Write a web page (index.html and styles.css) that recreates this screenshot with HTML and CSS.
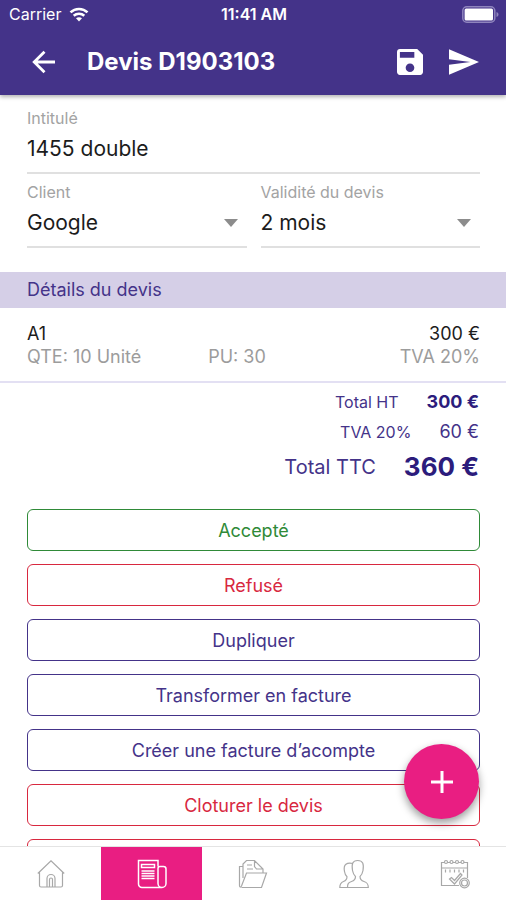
FILE: index.html
```html
<!DOCTYPE html>
<html lang="fr">

<head>
    <meta charset="UTF-8">
    <meta name="viewport" content="width=device-width, initial-scale=1.0">
    <title>Devis D1903103</title>
    <link rel="stylesheet" href="styles.css">
</head>

<body>
    <!-- En-tête -->
    <header class="header">
        <div class="status-bar">
            <div class="status-left">
                <span>Carrier</span>
                <svg width="20" height="15" viewBox="0 0 20 15" fill="none" stroke="#fff" stroke-width="2.6">
                    <path d="M1.5 5.4C6.2 .8 13.8 .8 18.5 5.4" />
                    <path d="M4.7 8.8C7.7 6 12.3 6 15.3 8.8" />
                    <path d="M10 14.4L7 11.3C8.7 9.8 11.3 9.8 13 11.3Z" fill="#fff" stroke="none" />
                </svg>
            </div>
            <div class="status-time">11:41 AM</div>
            <div class="status-right">
                <svg width="37" height="17" viewBox="0 0 37 17">
                    <rect x=".8" y=".8" width="32" height="15.4" rx="4" fill="none" stroke="#8f84bd" stroke-width="1.5" />
                    <rect x="2.6" y="2.6" width="28.4" height="11.8" rx="1.5" fill="#fff" />
                    <path d="M34.5 6v5c1.3-.5 2-1.4 2-2.5s-.7-2-2-2.5z" fill="#8f84bd" />
                </svg>
            </div>
        </div>
        <div class="toolbar">
            <button class="icon-btn" type="button" aria-label="Retour">
                <svg width="24" height="24" viewBox="0 0 24 24" fill="none" stroke="#fff" stroke-width="2.8">
                    <path d="M23 12H3M12.5 1.7L2.2 12l10.3 10.3" />
                </svg>
            </button>
            <h1>Devis D1903103</h1>
            <button class="icon-btn" type="button" aria-label="Enregistrer">
                <svg width="26" height="26" viewBox="3 3 18 18" fill="#fff">
                    <path d="M17 3H5c-1.110 0-2 .9-2 2v14c0 1.1.89 2 2 2h14c1.1 0 2-.9 2-2V7l-4-4zm-5 16c-1.660 0-3-1.340-3-3s1.340-3 3-3 3 1.340 3 3-1.340 3-3 3zm3-10H5V5h10v4z" />
                </svg>
            </button>
            <button class="icon-btn" type="button" aria-label="Envoyer">
                <svg width="30" height="26" viewBox="2 3 21 18" fill="#fff">
                    <path d="M2 21L23 12 2 3v7l15 2-15 2z" />
                </svg>
            </button>
        </div>
    </header>

    <!-- Contenu du devis -->
    <main class="content">
        <form class="form">
            <div class="field">
                <label for="intitule">Intitulé</label>
                <input id="intitule" type="text" value="1455 double">
            </div>
            <div class="field-row">
                <div class="field">
                    <label for="client">Client</label>
                    <select id="client">
                        <option>Google</option>
                    </select>
                </div>
                <div class="field">
                    <label for="validite">Validité du devis</label>
                    <select id="validite">
                        <option>2 mois</option>
                    </select>
                </div>
            </div>
        </form>

        <h2 class="section-title">Détails du devis</h2>

        <div class="item">
            <div class="item-row item-main">
                <span>A1</span>
                <span></span>
                <span class="right">300 €</span>
            </div>
            <div class="item-row item-info">
                <span>QTE: 10 Unité</span>
                <span>PU: 30</span>
                <span class="right">TVA 20%</span>
            </div>
        </div>

        <div class="totals">
            <div class="total">
                <span>Total HT</span>
                <span class="amount bold">300 €</span>
            </div>
            <div class="total">
                <span>TVA 20%</span>
                <span class="amount">60 €</span>
            </div>
            <div class="total total-ttc">
                <span>Total TTC</span>
                <span class="amount bold">360 €</span>
            </div>
        </div>

        <div class="actions">
            <button class="btn green" type="button">Accepté</button>
            <button class="btn red" type="button">Refusé</button>
            <button class="btn" type="button">Dupliquer</button>
            <button class="btn" type="button">Transformer en facture</button>
            <button class="btn" type="button">Créer une facture d’acompte</button>
            <button class="btn red" type="button">Cloturer le devis</button>
            <button class="btn red" type="button" aria-label="Supprimer"></button>
        </div>
    </main>

    <button class="fab" type="button" aria-label="Ajouter">
        <svg width="22" height="22" viewBox="0 0 22 22" stroke="#fff" stroke-width="3">
            <path d="M11 0v22M0 11h22" />
        </svg>
    </button>

    <!-- Barre d'onglets -->
    <nav class="tabs">
        <a class="tab" href="#" aria-label="Accueil">
            <svg width="28" height="28" viewBox="0 0 28 28">
                <path d="M.8 13.5L14 .8l13.200 12.700M2.500 12.500V25.500a1.500 1.500 0 0 0 1.500 1.500h20a1.500 1.500 0 0 0 1.500-1.500v-13" />
                <path d="M10 27v-8.500a4 4 0 0 1 8 0V27M12.500 27v-7.500a1.500 1.500 0 0 1 3 0V27" />
            </svg>
        </a>
        <a class="tab active" href="#" aria-label="Devis">
            <svg width="30" height="30" viewBox="0 0 30 30">
                <path d="M21 7.500V1.500H1.500V25A3.500 3.500 0 0 0 5 28.500h20a4 4 0 0 0 4-4V10a2.500 2.500 0 0 0-2.500-2.500H23A2 2 0 0 0 21 9.500V24.500a4 4 0 0 0 4 4" />
                <path d="M4.500 5.500h13v3h-13zM4.500 12h13M4.500 14.500h13M4.500 17h13M4.500 19.500h13" />
            </svg>
        </a>
        <a class="tab" href="#" aria-label="Dossiers">
            <svg width="30" height="30" viewBox="0 0 30 30">
                <path d="M6 28.500h17.500l5-14.500H8.500L3.500 27c-1 2-2 1-2-.5V7.500H5M3.500 28.500H7M5 19V5l3.500-3.500h8l8.500 8.500v4M16.500 1.500v6l2 2.500H25M9 6h5M9 10h6" />
            </svg>
        </a>
        <a class="tab" href="#" aria-label="Clients">
            <svg width="30" height="30" viewBox="0 0 30 30">
                <path d="M8.500 28.500H29.300c0-4-1.300-5-4.300-6-3-1-4-2-4-5 2-1.500 2.500-3.500 3-6C25 5 24 1.500 18.700 1.500S12.500 5 13.500 11.500c.5 2.500 1 4.500 3 6 0 3-1 4-4 5-3 1-4 2-4 6z" />
                <path d="M14 4.500C8 3 4 5.500 5.500 12.500c.3 2 1 4 2.500 5.200 0 3-1 3.800-3.500 4.800S.8 24.500.8 28.500h7.700" />
            </svg>
        </a>
        <a class="tab" href="#" aria-label="Agenda">
            <svg width="30" height="30" viewBox="0 0 30 30">
                <path d="M19 26.500H1.500V3.500H27.500V19M1.500 9h26M5.500 10.500v3M10 10.500v3M14.500 10.500v3M19 10.500v3M23.500 10.500v3" />
                <path d="M9.500 20l2-1.500 3 3 6-7 1.500 1.500-7.500 9z" />
                <g fill="#fff">
                    <circle cx="6" cy="3" r="1.500" />
                    <circle cx="11.500" cy="3" r="1.500" />
                    <circle cx="17" cy="3" r="1.500" />
                    <circle cx="22.500" cy="3" r="1.500" />
                    <circle cx="24.500" cy="24" r="4.800" />
                </g>
                <circle cx="24.500" cy="24" r="3" />
            </svg>
        </a>
    </nav>
</body>

</html>
```
FILE: styles.css
```css
/* RESET ET BASE */
* {
    margin: 0;
    padding: 0;
    box-sizing: border-box;
}

body {
    font-family: Inter, 'Helvetica Neue', Arial, sans-serif;
    background: #fff;
    color: #1c1c1c;
    height: 100vh;
    display: flex;
    flex-direction: column;
    overflow: hidden;
}

button,
input,
select {
    font-family: inherit;
    background: none;
    border: none;
    outline: none;
}

button {
    cursor: pointer;
}

svg {
    display: block;
}

/* EN-TÊTE */
.header {
    background: #443389;
    color: #fff;
    box-shadow: 0 2px 4px rgba(0, 0, 0, 0.3);
    z-index: 1;
}

.status-bar {
    height: 28px;
    padding: 0 7px 0 9px;
    display: grid;
    grid-template-columns: 1fr auto 1fr;
    align-items: center;
    font-size: 16px;
}

.status-left {
    display: flex;
    align-items: center;
    gap: 8px;
}

.status-time {
    font-weight: 600;
}

.status-right {
    display: flex;
    justify-content: flex-end;
}

.toolbar {
    height: 67px;
    padding: 0 27px 0 32px;
    display: flex;
    align-items: center;
    gap: 26px;
}

.toolbar h1 {
    flex: 1;
    padding-left: 5px;
    font-size: 24px;
    font-weight: 700;
}

/* FORMULAIRE */
.content {
    flex: 1;
    min-height: 0;
    overflow: hidden;
}

.form {
    padding: 13px 26px 24px 27px;
}

.field {
    flex: 1;
    min-width: 0;
    position: relative;
    display: flex;
    flex-direction: column;
    border-bottom: 2px solid #e0e0e0;
}

.field-row {
    display: flex;
    gap: 14px;
    padding-top: 8px;
}

.field label {
    color: #a3a3a3;
    font-size: 16px;
    line-height: 20px;
}

.field input,
.field select {
    width: 100%;
    height: 44px;
    padding-bottom: 4px;
    color: #1c1c1c;
    font-size: 21px;
    appearance: none;
}

.field-row .field::after {
    content: '';
    position: absolute;
    right: 9px;
    bottom: 19px;
    border: 7px solid transparent;
    border-top: 8px solid #8c8c8c;
    border-bottom: none;
    pointer-events: none;
}

/* DÉTAILS */
.section-title {
    padding: 0 27px;
    background: #d5cfe7;
    color: #443389;
    font-size: 18px;
    font-weight: 400;
    line-height: 36px;
}

.item {
    padding: 14px 26px 13px 27px;
    border-bottom: 2px solid #e3e0f3;
    font-size: 18px;
    line-height: 23px;
}

.item-row {
    display: grid;
    grid-template-columns: 2fr 2fr 1fr;
}

.item-info {
    color: #9c9c9c;
}

.right {
    text-align: right;
    white-space: nowrap;
}

/* TOTAUX */
.totals {
    padding: 4px 27px 0;
    color: #443389;
}

.total {
    display: flex;
    justify-content: flex-end;
    align-items: center;
    gap: 28px;
    font-size: 16px;
    line-height: 30px;
}

.amount {
    font-size: 18px;
}

.bold {
    color: #2c1c7c;
    font-weight: 700;
}

.total-ttc {
    font-size: 20px;
    line-height: 40px;
}

.total-ttc .amount {
    font-size: 26px;
}

/* BOUTONS */
.actions {
    padding: 22px 26px 0 27px;
    display: flex;
    flex-direction: column;
    gap: 13px;
}

.btn {
    height: 42px;
    border: 1px solid #443389;
    border-radius: 6px;
    color: #443389;
    font-size: 18px;
}

.green {
    border-color: #2f8a38;
    color: #2f8a38;
}

.red {
    border-color: #d8283f;
    color: #d8283f;
}

.fab {
    position: absolute;
    right: 27px;
    bottom: 81px;
    width: 75px;
    height: 75px;
    display: flex;
    align-items: center;
    justify-content: center;
    border-radius: 50%;
    background: #e91e82;
    box-shadow: 0 4px 8px rgba(0, 0, 0, 0.4);
}

/* ONGLETS */
.tabs {
    height: 54px;
    display: flex;
    border-top: 1px solid #e4e4e4;
    background: #fff;
}

.tab {
    flex: 1;
    display: flex;
    align-items: center;
    justify-content: center;
}

.tab svg {
    fill: none;
    stroke: #a8a8a8;
    stroke-width: 1.2;
}

.tab.active {
    background: #e91e82;
}

.tab.active svg {
    stroke: #fff;
    stroke-width: 1.5;
}
```
